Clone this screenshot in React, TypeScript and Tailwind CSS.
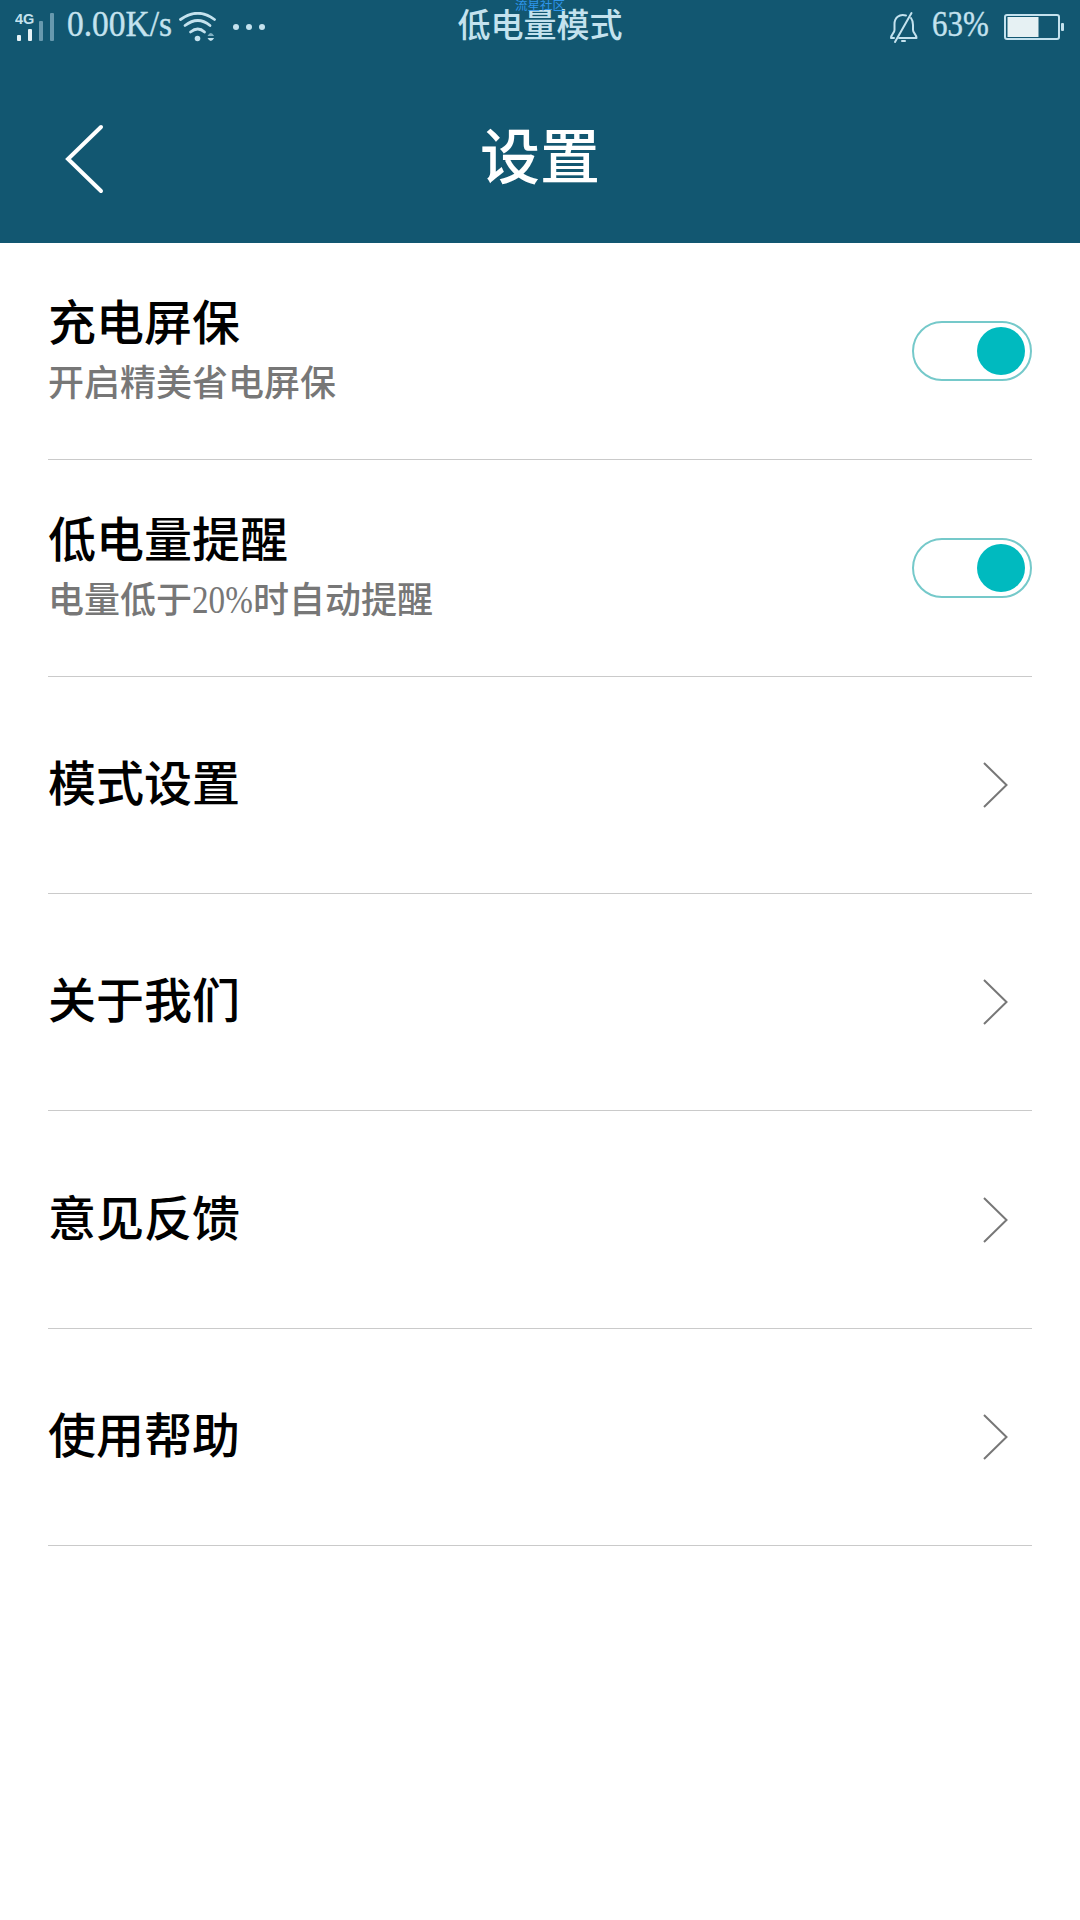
import React, { useState } from 'react';
import clsx from 'clsx';

interface ToggleItem {
  title: string;
  description: React.ReactNode;
}

const toggleItems: ToggleItem[] = [
  { title: '充电屏保', description: '开启精美省电屏保' },
  {
    title: '低电量提醒',
    description: (
      <>
        电量低于
        <span className="inline-block w-[61px] origin-left scale-x-[0.83] text-[40px] leading-[40px]">20%</span>
        时自动提醒
      </>
    ),
  },
];

const linkItems = ['模式设置', '关于我们', '意见反馈', '使用帮助'];

const StatusBar: React.FC = () => (
  <div className="relative grid h-[54px] grid-cols-3 items-start text-[33px] font-medium text-[#c4e2ee]">
    <div className="flex items-start">
      <svg width="40" height="30" viewBox="0 0 40 30" className="ml-[15px] mt-[12px] shrink-0">
        <text x="0" y="12" fontSize="14.500" fontWeight="bold" fill="currentColor" fontFamily="Liberation Sans, sans-serif">4G</text>
        <rect x="2" y="23" width="4" height="6" rx="1" fill="#e6f3f7" />
        <rect x="13" y="17" width="4" height="12" rx="1" fill="#e6f3f7" />
        <rect x="24" y="9" width="4" height="20" rx="1" fill="#6799ae" />
        <rect x="35" y="1" width="4" height="28" rx="1" fill="#6799ae" />
      </svg>
      <span className="ml-[12px] inline-block w-[105px] shrink-0 origin-left scale-x-[0.93] whitespace-nowrap text-[36px] leading-[49px] [-webkit-text-stroke:0.4px_currentColor]">0.00K/s</span>
      <svg width="38" height="30" viewBox="0 0 38 30" fill="none" stroke="currentColor" strokeWidth="2.8" strokeLinecap="round" className="ml-[7px] mt-[12px] shrink-0">
        <path d="M1.500 7.500Q19 -5 35.500 7.500" />
        <path d="M6 13.500Q19 3.500 31 13.500" />
        <path d="M11.500 20Q19 14 25.500 20" />
        <circle cx="18.500" cy="26.500" r="2.800" fill="currentColor" stroke="none" />
        <path d="M28.500 24q3.300 -6 6.600 0z" fill="#7fafc1" stroke="none" />
        <path d="M28.500 26q3.300 6 6.600 0z" fill="currentColor" stroke="none" />
      </svg>
      <div className="ml-[16px] mt-[24px] flex gap-[7px]">
        <i className="size-[6px] rounded-full bg-[#c4e2ee]" />
        <i className="size-[6px] rounded-full bg-[#c4e2ee]" />
        <i className="size-[6px] rounded-full bg-[#c4e2ee]" />
      </div>
    </div>
    <div className="text-center leading-[53px]">低电量模式</div>
    <div className="flex items-start justify-end">
      <svg width="30" height="33" viewBox="0 0 30 33" fill="none" stroke="currentColor" strokeWidth="2" strokeLinecap="round" strokeLinejoin="round" className="mr-[13px] mt-[11px] shrink-0">
        <path d="M17 4.500C10 2.500 5.500 7 5.500 13V19C5.500 22 2 23.500 2 27H5" />
        <path d="M22 7C23.500 9 24 11 24 14V19C24 22 27.500 23.500 27.500 27H10" />
        <path d="M22.500 2L6 31" />
        <path d="M13 30h3" />
      </svg>
      <span className="inline-block w-[58px] shrink-0 origin-left scale-x-[0.86] text-[36px] leading-[48px] [-webkit-text-stroke:0.4px_currentColor]">63%</span>
      <svg width="62" height="28" viewBox="0 0 62 28" className="ml-[14px] mr-[14px] mt-[13px] shrink-0">
        <rect x="1" y="2" width="54" height="24" rx="2" fill="none" stroke="currentColor" strokeWidth="2" />
        <rect x="3.500" y="4" width="31" height="20" fill="#e6f1f3" />
        <rect x="57" y="10" width="3" height="8" rx="1" fill="currentColor" />
      </svg>
    </div>
    <span className="absolute left-1/2 top-0 -translate-x-1/2 text-[12.500px] font-normal leading-[13px] text-[#2e95ea]">流星社区</span>
  </div>
);

const Toggle: React.FC = () => {
  const [on, setOn] = useState(true);

  return (
    <button
      type="button"
      role="switch"
      aria-checked={on}
      onClick={() => setOn(!on)}
      className={clsx(
        'flex h-[60px] w-[120px] items-center rounded-full border-2 border-[#75c9ca] px-[5px]',
        on ? 'justify-end' : 'justify-start'
      )}
    >
      <span className="size-12 rounded-full bg-[#00babf]" />
    </button>
  );
};

const App: React.FC = () => {
  return (
    <div className="min-h-[1920px] w-[1080px] bg-white font-['Liberation_Serif','Noto_Sans_CJK_SC',serif]">
      <header className="h-[243px] bg-[#125771]">
        <StatusBar />
        <div className="grid h-[189px] grid-cols-[1fr_auto_1fr] items-start text-white">
          <svg width="40" height="70" viewBox="0 0 40 70" fill="none" stroke="currentColor" strokeWidth="4" strokeLinecap="round" className="ml-[65px] mt-[70px]">
            <path d="M36 3L3 35L36 67" />
          </svg>
          <h1 className="mt-[60px] text-[60px] font-medium leading-[90px]">设置</h1>
        </div>
      </header>

      <main className="px-12">
        {toggleItems.map((item) => (
          <section key={item.title} className="flex h-[217px] items-center justify-between border-b border-[#cacaca]">
            <div className="pt-1">
              <h2 className="text-[48px] font-medium leading-[62px] text-black">{item.title}</h2>
              <p className="h-[58px] whitespace-nowrap text-[36px] font-medium leading-[58px] text-[#777777]">{item.description}</p>
            </div>
            <Toggle />
          </section>
        ))}
        {linkItems.map((title) => (
          <section
            key={title}
            className="flex h-[217px] items-center justify-between border-b border-[#cacaca] nth-5:h-[218px]"
          >
            <h2 className="text-[48px] font-medium leading-[62px] text-black">{title}</h2>
            <svg width="28" height="50" viewBox="0 0 28 50" fill="none" stroke="#777777" strokeWidth="2" className="mr-[23px]">
              <path d="M3 3L25.500 25L3 47" />
            </svg>
          </section>
        ))}
      </main>
    </div>
  );
};

export default App;
